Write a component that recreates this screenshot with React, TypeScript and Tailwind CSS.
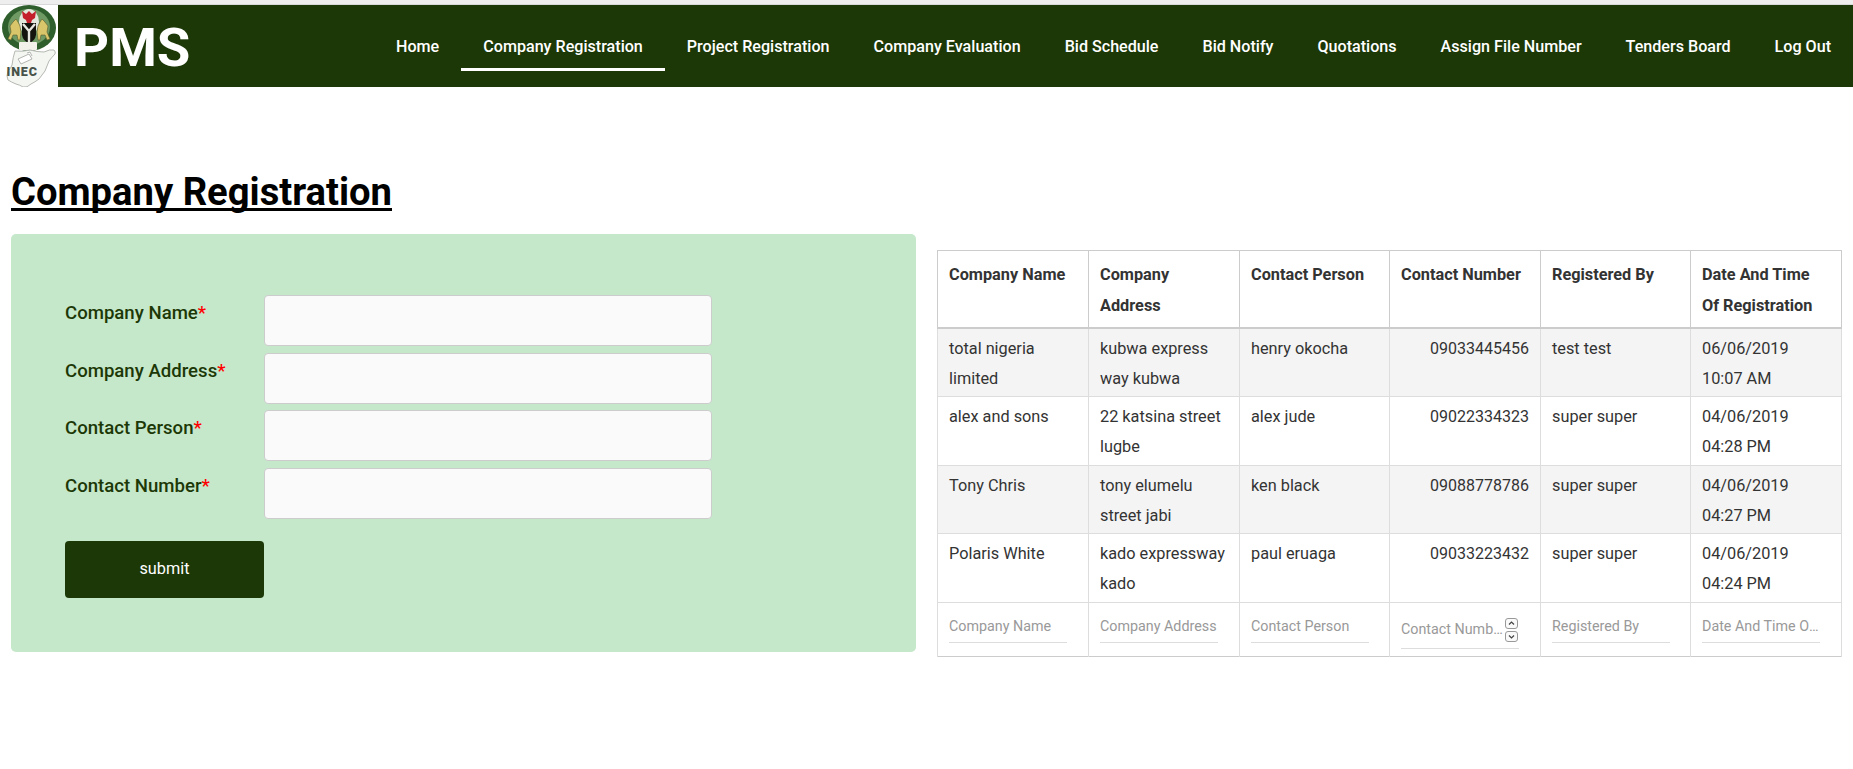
import React from "react";

const navItems = [
  "Home",
  "Company Registration",
  "Project Registration",
  "Company Evaluation",
  "Bid Schedule",
  "Bid Notify",
  "Quotations",
  "Assign File Number",
  "Tenders Board",
  "Log Out",
];

const fields = ["Company Name", "Company Address", "Contact Person", "Contact Number"];

const columns = [
  { title: "Company Name", w: "w-[151px]" },
  { title: "Company Address", w: "w-[151px]" },
  { title: "Contact Person", w: "w-[150px]" },
  { title: "Contact Number", w: "w-[151px]" },
  { title: "Registered By", w: "w-[150px]" },
  { title: "Date And Time Of Registration", w: "w-[151px]" },
];

const rows = [
  ["total nigeria limited", "kubwa express way kubwa", "henry okocha", "09033445456", "test test", "06/06/2019 10:07 AM"],
  ["alex and sons", "22 katsina street lugbe", "alex jude", "09022334323", "super super", "04/06/2019 04:28 PM"],
  ["Tony Chris", "tony elumelu street jabi", "ken black", "09088778786", "super super", "04/06/2019 04:27 PM"],
  ["Polaris White", "kado expressway kado", "paul eruaga", "09033223432", "super super", "04/06/2019 04:24 PM"],
];

const InecLogo = () => (
  <svg width="58" height="82" viewBox="0 0 58 82" className="block">
    {/* coat of arms */}
    <ellipse cx="29" cy="23" rx="27" ry="23" fill="#2f5f2c" />
    <ellipse cx="29" cy="22" rx="21" ry="18" fill="#6f9a64" />
    <ellipse cx="29" cy="17" rx="10" ry="13" fill="#e2e8dc" />
    <path d="M22 6 l4 3 3-3 3 3 4-3 -1 7 -3 2 -1 3 h-4 l-1-3 -3-2z" fill="#c4202c" />
    <path d="M22 18 h14 v12 q-1 6 -7 8 q-6 -2 -7 -8z" fill="#14140f" />
    <path d="M23 19 l6 7 6-7 M29 26 v11" stroke="#e8e8e0" strokeWidth="2.4" fill="none" />
    <path d="M8 34 l3 -7 -1 -6 3 -4 3 -3 2 3 2 4 1 6 -1 8 h-2 l-1 -5 -4 0 -2 5z" fill="#d9c66a" stroke="#5c5a2a" strokeWidth="0.6" />
    <path d="M50 34 l-3 -7 1 -6 -3 -4 -3 -3 -2 3 -2 4 -1 6 1 8 h2 l1 -5 4 0 2 5z" fill="#d9c66a" stroke="#5c5a2a" strokeWidth="0.6" />
    <rect x="19" y="37" width="18" height="8" rx="1" fill="#f2f2ea" />
    {/* map of Nigeria */}
    <path
      d="M15 46 q8 1 15 -1 q7 2 14 2 q6 -3 10 -2 q2 2 1 4 q-3 3 -6 7 q-2 5 -4 10 q-3 4 -6 8 q-4 3 -8 5 q-4 4 -8 3 q-3 -2 -7 -3 q-5 -2 -8 -4 q-2 -4 0 -9 q3 -3 4 -6 q1 -8 3 -14z"
      fill="#f4f6f2"
      stroke="#b5b9b2"
      strokeWidth="1"
    />
    <path d="M18 54 l11 -5 3 5 -11 5z M27 48 l3 -1 2 4" fill="#fff" stroke="#a0a39e" strokeWidth="0.8" />
    <text x="6.5" y="70.5" fontFamily="Roboto, sans-serif" fontWeight="900" fontSize="12.5" letterSpacing="0.9" fill="#47534a">
      INEC
    </text>
  </svg>
);

const Spinner = () => (
  <div className="absolute left-[115px] top-[15px] flex flex-col gap-[2px]">
    <svg width="13" height="11" viewBox="0 0 13 11" className="block">
      <rect x="0.5" y="0.5" width="12" height="10" rx="2.5" fill="#fafafa" stroke="#999" />
      <path d="M4 6.5 l2.5 -2.5 L9 6.5" fill="none" stroke="#444" strokeWidth="1.2" />
    </svg>
    <svg width="13" height="11" viewBox="0 0 13 11" className="block">
      <rect x="0.5" y="0.5" width="12" height="10" rx="2.5" fill="#fafafa" stroke="#999" />
      <path d="M4 4.5 l2.5 2.5 L9 4.5" fill="none" stroke="#444" strokeWidth="1.2" />
    </svg>
  </div>
);

export default function App() {
  return (
    <div className="min-h-[769px] bg-white font-['Roboto',sans-serif]">
      <div className="h-[5px] bg-[#eeeeee] border-b border-[#d8d8d8]" />

      <header className="flex h-[82px]">
        <div className="w-[58px] shrink-0 bg-white">
          <InecLogo />
        </div>
        <nav className="flex flex-1 items-start bg-[#1d3807] pl-[16px]">
          <div className="text-[54.5px] leading-[84px] font-bold text-white">PMS</div>
          <ul className="ml-auto flex">
            {navItems.map((item) => (
              <li
                key={item}
                className={`px-[22px] h-[66px] leading-[84px] text-[16.13px] font-medium text-white whitespace-nowrap ${
                  item === "Company Registration" ? "border-b-[3px] border-white" : ""
                }`}
              >
                {item}
              </li>
            ))}
          </ul>
        </nav>
      </header>

      <main className="px-[11px] pt-[82px]">
        <h1 className="text-[38.2px] leading-[47px] font-bold text-black underline decoration-[2.5px] underline-offset-[3px] [text-decoration-skip-ink:none]">
          Company Registration
        </h1>

        <div className="flex items-start mt-[18px]">
          <div className="w-[905px] h-[418px] shrink-0 rounded-[5px] bg-[#c5e8ca] pl-[54px] pt-[61px]">
            <div className="flex flex-col gap-[6.5px]">
              {fields.map((f) => (
                <div key={f} className="flex items-start">
                  <label className="w-[199px] shrink-0 pt-[5px] text-[18.6px] leading-[27px] font-medium text-[#1d3807]">
                    {f}
                    <span className="text-[#ff0000]">*</span>
                  </label>
                  <input
                    type="text"
                    className="w-[448px] h-[51px] rounded-[4px] border border-[#cccccc] bg-[#fafafa]"
                  />
                </div>
              ))}
            </div>
            <button className="mt-[22px] w-[199px] h-[57px] rounded-[4px] bg-[#1d3807] pt-[1px] text-[16.3px] text-white">
              submit
            </button>
          </div>

          <table className="ml-[21px] mt-[16px] w-[904px] table-fixed border-collapse border border-[#cccccc] text-[16.3px] text-[#333333]">
            <thead>
              <tr className="border-b-2 border-[#cccccc]">
                {columns.map((c, j) => (
                  <th
                    key={c.title}
                    className={`${c.w} border-x border-[#cccccc] pl-[11px] pt-[8px] pb-[6px] align-top text-left font-bold leading-[31px] ${
                      j === 5 ? "pr-[24px]" : "pr-[11px]"
                    }`}
                  >
                    {c.title}
                  </th>
                ))}
              </tr>
            </thead>
            <tbody>
              {rows.map((row, i) => (
                <tr key={row[0]} className={`border-b border-[#dddddd] ${i % 2 === 0 ? "bg-[#f4f4f4]" : "bg-white"}`}>
                  {row.map((cell, j) => (
                    <td
                      key={j}
                      className={`border-x border-[#dddddd] px-[11px] pt-[4.6px] pb-[2.9px] align-top leading-[30px] ${
                        j === 3 ? "text-right text-[16px]" : "text-left"
                      }`}
                    >
                      {cell}
                    </td>
                  ))}
                </tr>
              ))}
              <tr className="border-t border-[#cccccc]">
                {columns.map((c, j) => (
                  <td key={c.title} className="relative border-x border-[#dddddd] pl-[11px] pb-[7px] align-top">
                    <input
                      type="text"
                      placeholder={c.title}
                      className={`block w-[118px] border-b border-[#dddddd] text-[14.3px] outline-none placeholder:text-[#999999] text-ellipsis placeholder-shown:text-ellipsis ${
                        j === 3 ? "mt-[12px] h-[34px] pb-[4px] pr-[14px]" : "mt-[8px] h-[32px] pb-[0px]"
                      }`}
                    />
                    {j === 3 && <Spinner />}
                  </td>
                ))}
              </tr>
            </tbody>
          </table>
        </div>
      </main>
    </div>
  );
}
